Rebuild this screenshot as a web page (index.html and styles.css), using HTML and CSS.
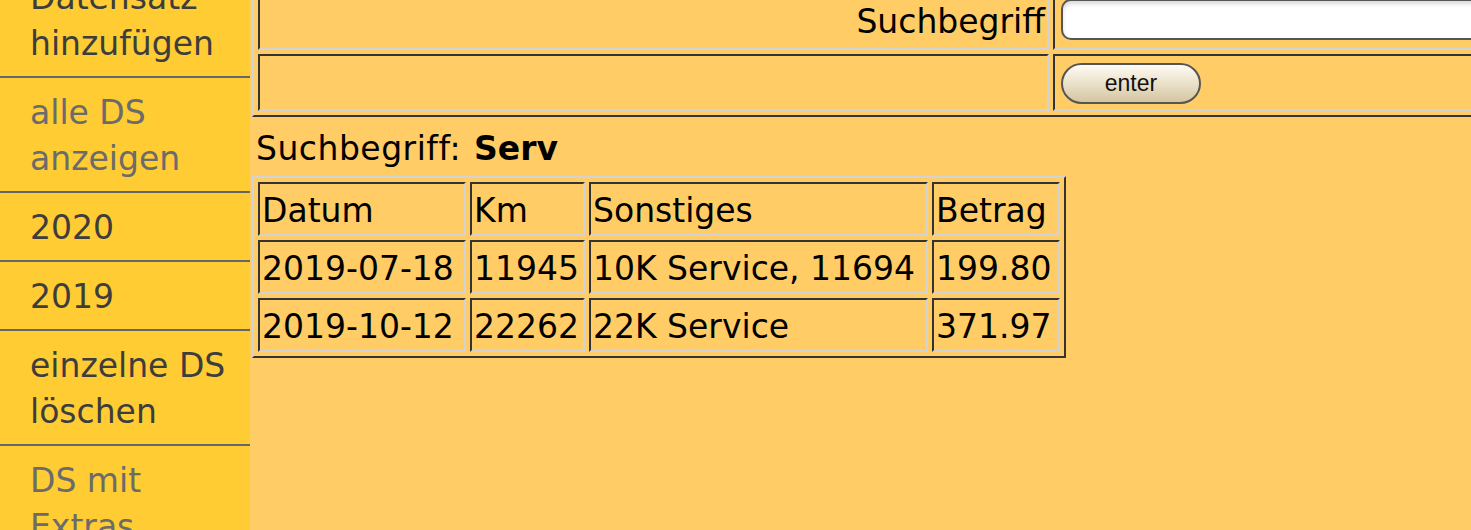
FILE: index.html
```html
<!DOCTYPE html>
<html lang="de">
<head>
    <meta charset="UTF-8">
    <meta name="viewport" content="width=device-width, initial-scale=1.0">
    <title>Fahrtenbuch - Suche</title>
    <link rel="stylesheet" href="styles.css">
</head>
<body>
    <div class="page">
        <nav class="menu">
            <a href="#" class="item">Datensatz hinzufügen</a>
            <a href="#" class="item dim">alle DS anzeigen</a>
            <a href="#" class="item">2020</a>
            <a href="#" class="item">2019</a>
            <a href="#" class="item">einzelne DS löschen</a>
            <a href="#" class="item dim">DS mit Extras</a>
        </nav>

        <div class="main">
            <form class="search" onsubmit="return false;">
                <table class="box search-table">
                    <tr>
                        <td class="label">Suchbegriff</td>
                        <td class="input-cell"><input type="text" class="field" name="q"></td>
                    </tr>
                    <tr>
                        <td></td>
                        <td class="input-cell"><button type="submit" class="btn">enter</button></td>
                    </tr>
                </table>
            </form>

            <p class="result-title">Suchbegriff: <b>Serv</b></p>

            <table class="box results">
                <tr>
                    <th class="col-date">Datum</th>
                    <th class="col-km">Km</th>
                    <th class="col-note">Sonstiges</th>
                    <th class="col-sum">Betrag</th>
                </tr>
                <tr>
                    <td>2019-07-18</td>
                    <td>11945</td>
                    <td>10K Service, 11694</td>
                    <td>199.80</td>
                </tr>
                <tr>
                    <td>2019-10-12</td>
                    <td>22262</td>
                    <td>22K Service</td>
                    <td>371.97</td>
                </tr>
            </table>
        </div>
    </div>
</body>
</html>
```

FILE: styles.css
```css
html, body {
    margin: 0;
    padding: 0;
    overflow: hidden;
}
body {
    font-family: "DejaVu Sans", Verdana, sans-serif;
    font-size: 33px;
    line-height: 46px;
    color: #000;
    background-color: #ffcc66;
}
.page {
    display: flex;
    align-items: stretch;
    margin-top: -37px;
    min-height: 620px;
}
.menu {
    flex: 0 0 250px;
    width: 250px;
    background-color: #ffcc33;
}
.menu .item {
    display: block;
    padding: 12px 10px 9px 30px;
    border-bottom: 2px solid #666;
    color: #3d3d3d;
    text-decoration: none;
}
.menu .item.dim {
    color: #6b6b6b;
}
.main {
    flex: 1;
    padding: 27px 0 0 2px;
    min-width: 0;
}
.search {
    margin: 0;
}
.box {
    border: 2px solid;
    border-color: #d3d3d3 #333 #333 #d3d3d3;
    border-spacing: 4px;
}
.box td, .box th {
    border: 2px solid;
    border-color: #333 #d3d3d3 #d3d3d3 #333;
    padding: 4px 2px 0;
    font-weight: normal;
    text-align: left;
    white-space: nowrap;
}
.search-table td {
    padding: 1px 2px 3px;
}
.search-table {
    width: 1300px;
}
.search-table .label {
    width: 783px;
    text-align: right;
}
.field {
    display: block;
    box-sizing: border-box;
    width: 480px;
    height: 41px;
    margin: 0 0 5px 4px;
    border: 2px solid #555;
    border-radius: 10px;
    background-color: #fff;
    box-shadow: inset 0 3px 4px rgba(0, 0, 0, 0.15);
    font: 22px "Liberation Sans", Arial, sans-serif;
}
.btn {
    display: block;
    box-sizing: border-box;
    width: 140px;
    height: 41px;
    margin: 6px 0 2px 4px;
    padding: 0;
    border: 2px solid #555;
    border-radius: 21px;
    background: linear-gradient(#fffcf3, #d5c5a1);
    font: 23px "Liberation Sans", Arial, sans-serif;
    color: #111;
}
.result-title {
    margin: 9px 0 4px 4px;
    letter-spacing: 0.5px;
    word-spacing: 2px;
}
.result-title b {
    letter-spacing: 0;
}
.col-date {
    width: 200px;
}
.col-km {
    width: 107px;
}
.col-note {
    width: 331px;
}
.col-sum {
    width: 120px;
}
```
